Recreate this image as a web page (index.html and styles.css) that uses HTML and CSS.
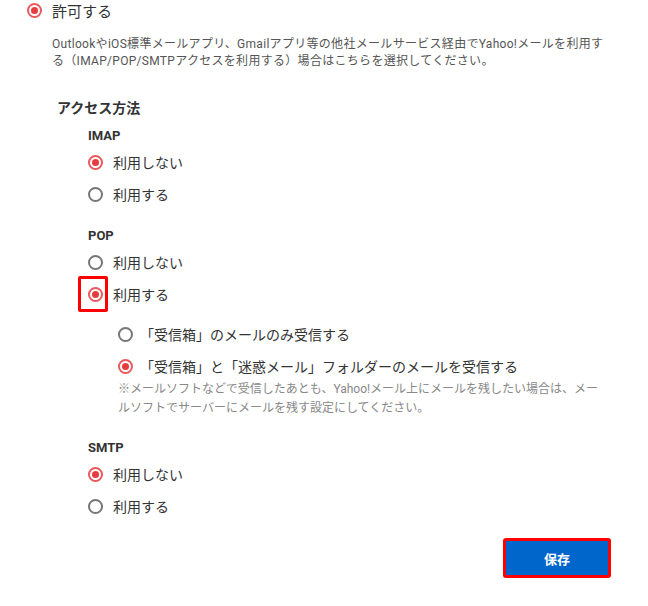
FILE: index.html
```html
<!DOCTYPE html>
<html lang="ja">
<head>
    <meta charset="UTF-8">
    <meta name="viewport" content="width=device-width, initial-scale=1.0">
    <title>IMAP/POP/SMTPアクセス</title>
    <link rel="stylesheet" href="styles.css">
</head>
<body>
    <div class="page">
        <div class="option-row allow-row">
            <span class="radio checked"></span>
            <span class="option-label">許可する</span>
        </div>
        <p class="desc">OutlookやiOS標準メールアプリ、Gmailアプリ等の他社メールサービス経由でYahoo!メールを利用する（IMAP/POP/SMTPアクセスを利用する）場合はこちらを選択してください。</p>

        <h2 class="access-title">アクセス方法</h2>

        <div class="group">
            <h3 class="group-title">IMAP</h3>
            <div class="option-row"><span class="radio checked"></span><span class="option-label">利用しない</span></div>
            <div class="option-row"><span class="radio"></span><span class="option-label">利用する</span></div>
        </div>

        <div class="group pop-group">
            <h3 class="group-title">POP</h3>
            <div class="option-row"><span class="radio"></span><span class="option-label">利用しない</span></div>
            <div class="option-row">
                <span class="radio checked"><span class="mark-box"></span></span>
                <span class="option-label">利用する</span>
            </div>
            <div class="sub-options">
                <div class="option-row"><span class="radio"></span><span class="option-label sub-label">「受信箱」のメールのみ受信する</span></div>
                <div class="option-row"><span class="radio checked"></span><span class="option-label sub-label">「受信箱」と「迷惑メール」フォルダーのメールを受信する</span></div>
                <p class="note">※メールソフトなどで受信したあとも、Yahoo!メール上にメールを残したい場合は、メールソフトでサーバーにメールを残す設定にしてください。</p>
            </div>
        </div>

        <div class="group smtp-group">
            <h3 class="group-title">SMTP</h3>
            <div class="option-row"><span class="radio checked"></span><span class="option-label">利用しない</span></div>
            <div class="option-row"><span class="radio"></span><span class="option-label">利用する</span></div>
        </div>

        <div class="actions">
            <button class="save-btn">保存</button>
        </div>
    </div>
</body>
</html>
```

FILE: styles.css
```css
body {
    margin: 0;
    background: #fff;
    color: #333;
    font-family: Roboto, "Noto Sans CJK JP", sans-serif;
}
.page {
    width: 648px;
    display: flex;
    flex-direction: column;
}
.option-row {
    display: flex;
    align-items: center;
    height: 32px;
    gap: 10px;
    font-size: 14px;
}
.allow-row {
    height: 20px;
    padding-left: 27px;
    font-size: 15px;
}
.radio {
    position: relative;
    width: 15px;
    height: 15px;
    box-sizing: border-box;
    border: 2px solid #777;
    border-radius: 50%;
    flex-shrink: 0;
}
.radio.checked {
    border-color: #ea5a5c;
}
.radio.checked::after {
    content: "";
    position: absolute;
    left: 2px;
    top: 2px;
    width: 7px;
    height: 7px;
    border-radius: 50%;
    background: #e63c3f;
}
/* 赤い枠で囲む */
.mark-box {
    position: absolute;
    left: -12px;
    top: -13px;
    width: 30px;
    height: 36px;
    box-sizing: border-box;
    border: 3px solid #f00;
    border-radius: 2px;
}
.desc {
    margin: 16px 0 0 52px;
    width: 556px;
    font-size: 12px;
    line-height: 17px;
    letter-spacing: 0.3px;
    color: #555;
}
.access-title {
    margin: 28px 0 0 57px;
    font-size: 14px;
    line-height: 20px;
    font-weight: bold;
}
.group {
    padding-left: 88px;
    margin-top: 8px;
}
.group-title {
    margin: 0;
    font-size: 13px;
    line-height: 20px;
    font-weight: bold;
}
.pop-group {
    margin-top: 16px;
}
.sub-options {
    padding-left: 30px;
    margin-top: 8px;
}
.sub-label {
    margin-left: -3px;
}
.note {
    margin: -2px 0 0;
    width: 490px;
    font-size: 12px;
    line-height: 19px;
    color: #888;
}
.smtp-group {
    margin-top: 20px;
}
.actions {
    display: flex;
    justify-content: flex-end;
    padding-right: 37px;
    margin-top: 16px;
}
.save-btn {
    width: 108px;
    height: 40px;
    border: 3px solid #f00;
    border-radius: 3px;
    background: #0066cc;
    color: #fff;
    font-family: inherit;
    font-size: 13px;
    font-weight: bold;
}
```
